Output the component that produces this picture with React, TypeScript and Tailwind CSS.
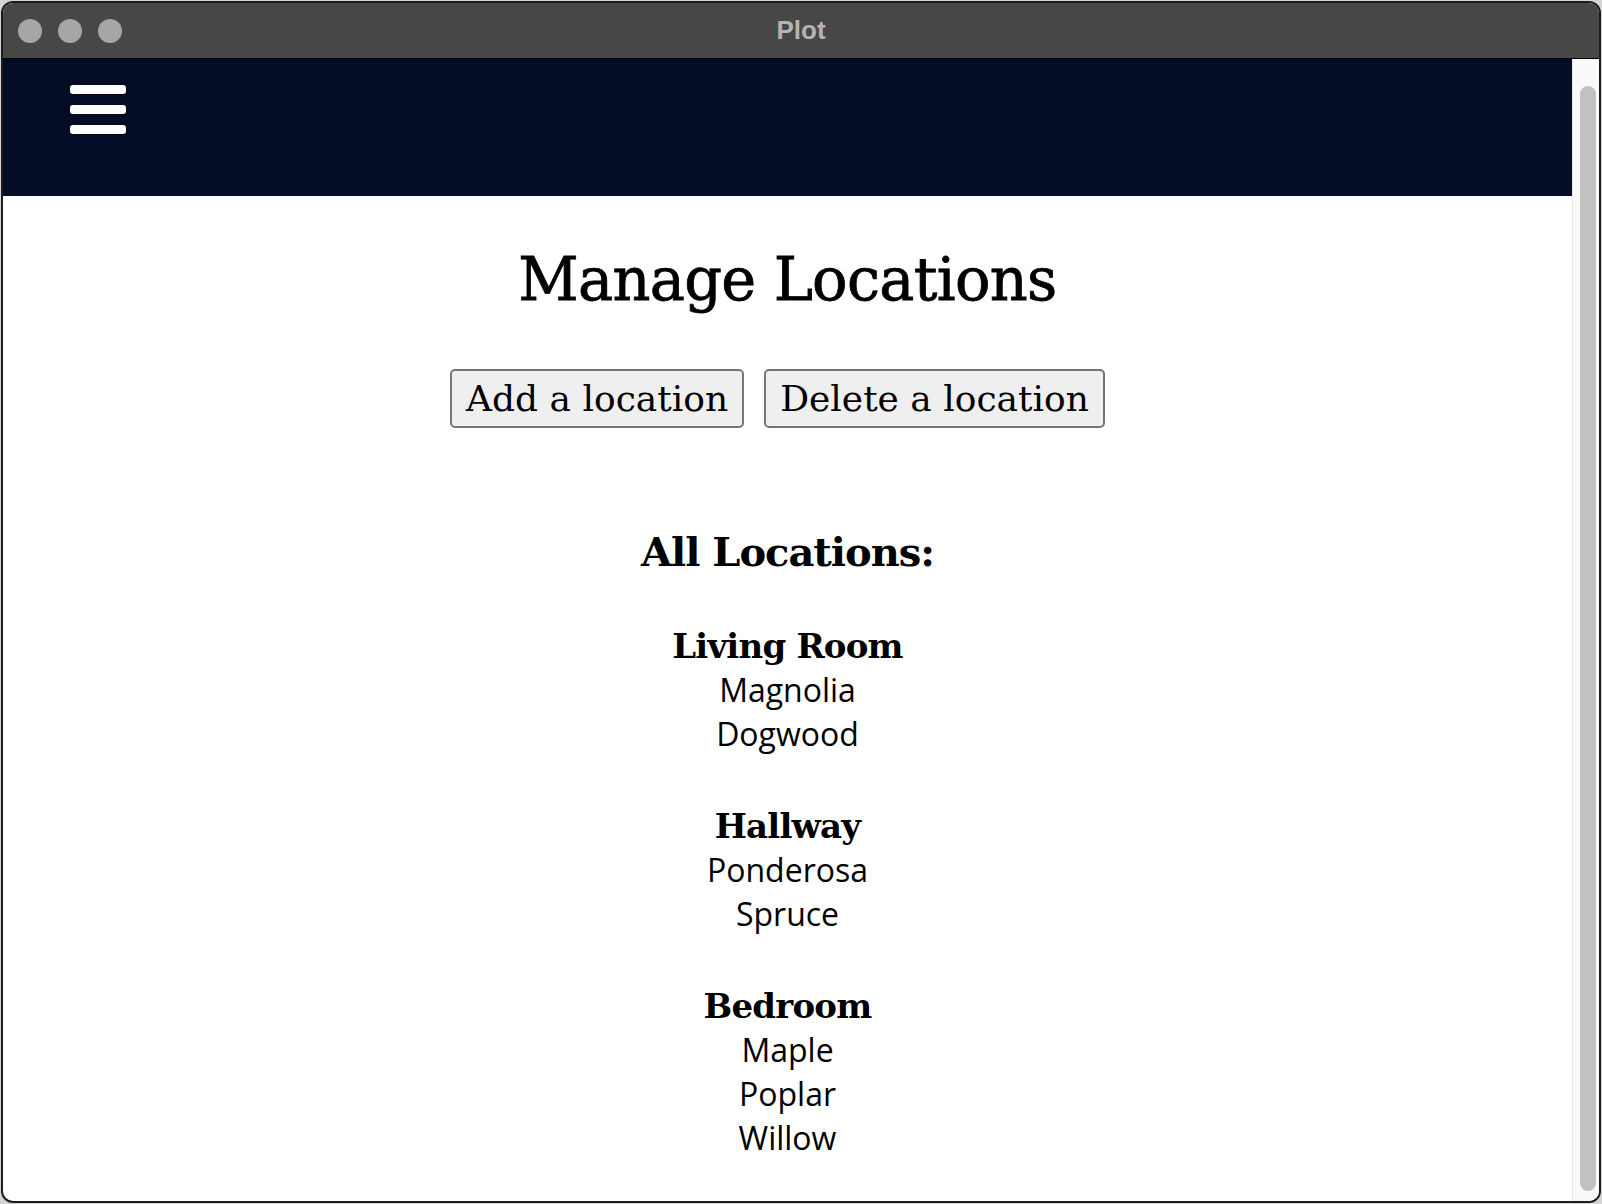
const locations = [
  { name: 'Living Room', plants: ['Magnolia', 'Dogwood'] },
  { name: 'Hallway', plants: ['Ponderosa', 'Spruce'] },
  { name: 'Bedroom', plants: ['Maple', 'Poplar', 'Willow'] },
];

const serif = "font-['DejaVu_Serif',serif]";

export default function App() {
  return (
    <div className="w-[1602px] h-[1204px] bg-[#d4d4d4] p-px">
      <div className="h-full flex flex-col overflow-hidden rounded-[12px] border-2 border-[#1c1c1c] bg-white">
        {/* title bar */}
        <div className="relative h-[56px] shrink-0 flex items-center bg-[#474747] border-b border-black">
          <div className="flex gap-4 pl-[15px]">
            <span className="w-6 h-6 rounded-full bg-[#a6a6a6]" />
            <span className="w-6 h-6 rounded-full bg-[#a6a6a6]" />
            <span className="w-6 h-6 rounded-full bg-[#a6a6a6]" />
          </div>
          <span className="absolute inset-x-0 text-center font-['Liberation_Sans',sans-serif] font-bold text-[26px] text-[#b4b4b4]">
            Plot
          </span>
        </div>

        <div className="flex-1 flex min-h-0">
          <div className="flex-1 flex flex-col">
            <nav className="h-[137px] bg-[#050d26] pl-[67px] pt-[26px]">
              <div className="flex flex-col gap-[11px] w-14">
                <span className="h-[9px] rounded-[3px] bg-white" />
                <span className="h-[9px] rounded-[3px] bg-white" />
                <span className="h-[9px] rounded-[3px] bg-white" />
              </div>
            </nav>

            <main className="text-center text-black">
              <h1 className={`${serif} text-[59px] leading-[64px] mt-[52px] tracking-[-0.7px] [-webkit-text-stroke:0.8px_black]`}>
                Manage Locations
              </h1>

              <div className="mt-[57px] flex justify-center">
                <button className={`${serif} text-[36px] leading-[55px] h-[59px] px-[14px] mr-5 bg-[#efefef] border-2 border-[#767676] rounded-[5px]`}>
                  Add a location
                </button>
                <button className={`${serif} text-[36px] leading-[55px] h-[59px] px-[14px] mr-5 bg-[#efefef] border-2 border-[#767676] rounded-[5px]`}>
                  Delete a location
                </button>
              </div>

              <h2 className={`${serif} font-bold text-[40px] leading-[52px] mt-[98px] tracking-[-1px]`}>All Locations:</h2>

              <div className="mt-[46px] flex flex-col gap-12 font-['Open_Sans',sans-serif] text-[32px] leading-[44px]">
                {locations.map((loc) => (
                  <div key={loc.name}>
                    <h3 className={`${serif} font-bold text-[34px] leading-[44px] tracking-[-0.8px]`}>{loc.name}</h3>
                    {loc.plants.map((p) => (
                      <p key={p}>{p}</p>
                    ))}
                  </div>
                ))}
              </div>
            </main>
          </div>

          {/* scrollbar */}
          <div className="w-[27px] shrink-0 bg-[#fafafa] border-l border-[#e9e9e9] pt-[27px] pb-[10px] pl-[7px] pr-[3px]">
            <div className="h-full rounded-full bg-[#c1c1c1]" />
          </div>
        </div>
      </div>
    </div>
  );
}
